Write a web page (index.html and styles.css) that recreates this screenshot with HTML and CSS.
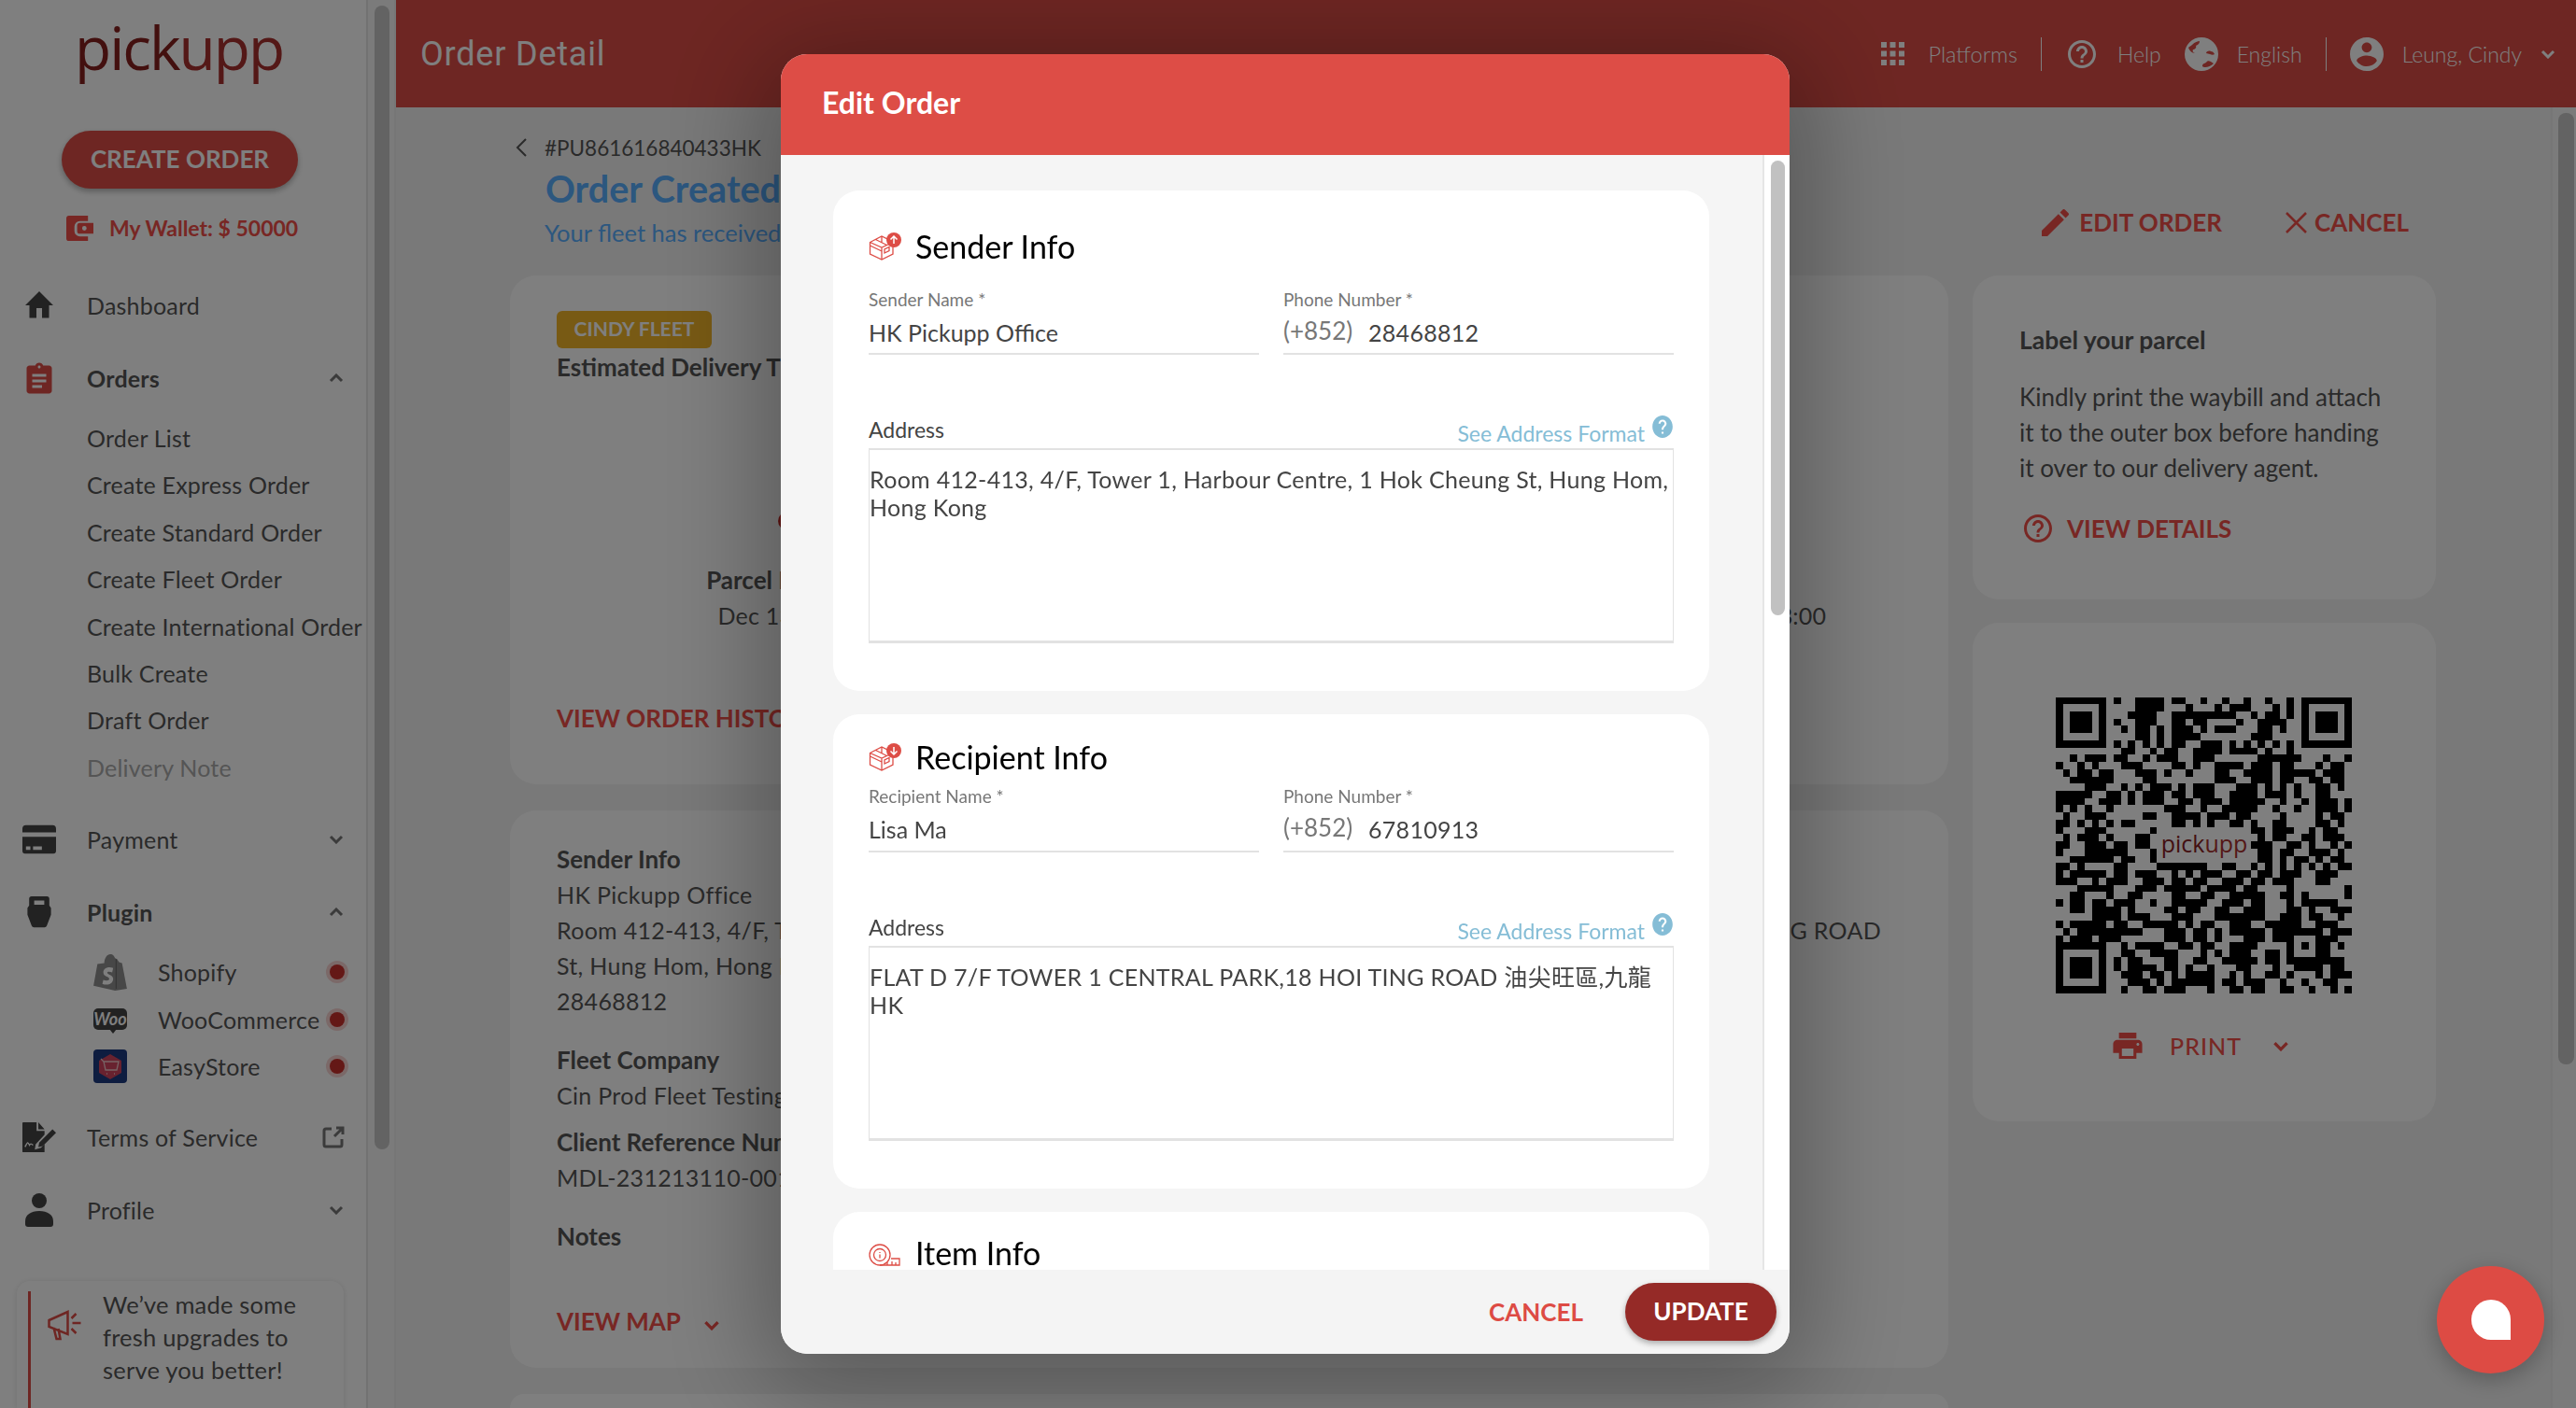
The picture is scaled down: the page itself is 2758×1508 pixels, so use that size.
FILE: index.html
```html
<!DOCTYPE html>
<html lang="en">
<head>
    <meta charset="UTF-8">
    <meta name="viewport" content="width=device-width, initial-scale=1.0">
    <title>Order Detail</title>
    <link rel="stylesheet" href="styles.css">
</head>
<body>
    <svg class="icon-defs" width="0" height="0">
        <symbol id="i-help" viewBox="0 0 24 24"><path d="M11 18h2v-2h-2v2zm1-16C6.48 2 2 6.48 2 12s4.48 10 10 10 10-4.48 10-10S17.52 2 12 2zm0 18c-4.41 0-8-3.59-8-8s3.59-8 8-8 8 3.59 8 8-3.59 8-8 8zm0-14c-2.21 0-4 1.79-4 4h2c0-1.1.9-2 2-2s2 .9 2 2c0 2-3 1.75-3 5h2c0-2.25 3-2.5 3-5 0-2.21-1.79-4-4-4z"/></symbol>
        <symbol id="i-help-fill" viewBox="0 0 24 24"><path d="M12 1C6.48 1 2 6 2 12s4.48 11 10 11 10-5 10-11S17.52 1 12 1zm1 18h-2v-2h2v2zm2.07-7.75l-.9.92C13.45 12.9 13 13.5 13 15h-2v-.5c0-1.1.45-2.1 1.17-2.83l1.24-1.26c.37-.36.59-.86.59-1.41 0-1.1-.9-2-2-2s-2 .9-2 2H8c0-2.21 1.79-4 4-4s4 1.79 4 4c0 .88-.36 1.68-.93 2.25z"/></symbol>
        <symbol id="i-up" viewBox="0 0 16 10"><path d="M2 8l6-6 6 6" fill="none" stroke="currentColor" stroke-width="3"/></symbol>
        <symbol id="i-down" viewBox="0 0 16 10"><path d="M2 2l6 6 6-6" fill="none" stroke="currentColor" stroke-width="3"/></symbol>
        <symbol id="i-box" viewBox="0 0 36 30">
            <path d="M1.500 10.500L14 4l12 6v13L14 29 1.500 23zM1.500 10.500L14 16l12-5.500M14 16v13M7.500 7.500l12 6M14 4v7M1.500 14l12.500 6" fill="none" stroke="currentColor" stroke-width="1.300"/>
            <path d="M17 22l5-2.500v-4l-5 2.500z" fill="none" stroke="currentColor" stroke-width="1.300"/>
            <circle cx="27" cy="8" r="8" fill="currentColor"/>
        </symbol>
    </svg>

    <div class="app">
        <aside class="sidebar">
            <div class="logo"><span class="logo-dark">pick</span>upp</div>
            <a class="create-btn">CREATE ORDER</a>
            <div class="wallet">
                <svg class="wallet-icon" viewBox="0 0 30 30"><path d="M3 1h21v6h-9a6 6 0 0 0-6 6v5a6 6 0 0 0 6 6h9v5H3a3 3 0 0 1-3-3V4a3 3 0 0 1 3-3z"/><path d="M15 9h15v12H15a3 3 0 0 1-3-3v-6a3 3 0 0 1 3-3zm5 3.500a2.500 2.500 0 1 0 0 5 2.500 2.500 0 0 0 0-5z" fill-rule="evenodd"/></svg>
                <span>My Wallet: $ 50000</span>
            </div>

            <nav class="nav">
                <div class="nav-row">
                    <svg class="nav-icon" viewBox="0 0 24 24"><path d="M10 21v-7h4v7h5v-9h3L12 2 2 12h3v9z"/></svg>
                    <span class="nav-text">Dashboard</span>
                </div>
                <div class="nav-row open">
                    <svg class="nav-icon red" viewBox="0 0 24 24"><path d="M19 3h-4.180C14.400 1.840 13.300 1 12 1c-1.300 0-2.400.84-2.820 2H5c-1.100 0-2 .9-2 2v16c0 1.100.9 2 2 2h14c1.100 0 2-.9 2-2V5c0-1.100-.9-2-2-2zm-7 0c.55 0 1 .45 1 1s-.45 1-1 1-1-.45-1-1 .45-1 1-1zm2 16H7v-2h7v2zm3-4H7v-2h10v2zm0-4H7V9h10v2z"/></svg>
                    <span class="nav-text">Orders</span>
                    <svg class="chev"><use href="#i-up"/></svg>
                </div>
                <div class="sub-list">
                    <div class="sub-row">Order List</div>
                    <div class="sub-row">Create Express Order</div>
                    <div class="sub-row">Create Standard Order</div>
                    <div class="sub-row">Create Fleet Order</div>
                    <div class="sub-row">Create International Order</div>
                    <div class="sub-row">Bulk Create</div>
                    <div class="sub-row">Draft Order</div>
                    <div class="sub-row disabled">Delivery Note</div>
                </div>
                <div class="nav-row">
                    <svg class="nav-icon" viewBox="0 0 38 34"><path d="M4 1h30a4 4 0 0 1 4 4v4H0V5a4 4 0 0 1 4-4zM0 14h38v16a3 3 0 0 1-3 3H3a3 3 0 0 1-3-3zm4 11v4h5v-4zm8 0v4h10v-4z" fill-rule="evenodd"/></svg>
                    <span class="nav-text">Payment</span>
                    <svg class="chev"><use href="#i-down"/></svg>
                </div>
                <div class="nav-row open">
                    <svg class="nav-icon" viewBox="0 0 28 40"><path d="M5 1a3 3 0 0 0-3 3v8L0 15v8l5 13a3 3 0 0 0 3 2h12a3 3 0 0 0 3-2l5-13v-8l-2-3V4a3 3 0 0 0-3-3zm3 5h12v5H8z" fill-rule="evenodd"/></svg>
                    <span class="nav-text">Plugin</span>
                    <svg class="chev"><use href="#i-up"/></svg>
                </div>
                <div class="sub-list plugin-list">
                    <div class="plugin-row">
                        <svg class="plugin-icon" viewBox="0 0 34 38"><path d="M11 10c0-5 3-9 6-9s4 2 5 4l2 1 2 3 3 1 5 26-12 2L0 33 4 11z" fill="#8e8e8e"/><path d="M23 6v30" stroke="#666" stroke-width="1"/><path d="M20 15c-5-2-10 0-10 4.500s6 4 6 6.500-4 2-6 1l-1 4c4 2 11 1 11-5 0-4-6-4-6-6.500 0-1 3-1 5 0z" fill="#fff"/></svg>
                        <span class="plugin-text">Shopify</span>
                        <span class="status-dot"></span>
                    </div>
                    <div class="plugin-row">
                        <span class="woo-icon">Woo</span>
                        <span class="plugin-text">WooCommerce</span>
                        <span class="status-dot"></span>
                    </div>
                    <div class="plugin-row">
                        <svg class="plugin-icon" viewBox="0 0 36 36"><rect width="36" height="36" rx="4" fill="#1c3a80"/><path d="M18 5l12 7v13l-12 7-12-7V12z" fill="#d0455e"/><path d="M11 13h16l-2 9H13zM14 26h1M22 26h1M8 10l3 3" fill="none" stroke="#efc6c9" stroke-width="1.300"/></svg>
                        <span class="plugin-text">EasyStore</span>
                        <span class="status-dot"></span>
                    </div>
                </div>
                <div class="nav-row">
                    <svg class="nav-icon" viewBox="0 0 38 34"><path d="M1 0h15v10h9v4L15 25l-1 6 7-2 4-4v9H1a1 1 0 0 1-1-1V1a1 1 0 0 1 1-1zM18 0l7 8h-7z"/><path d="M34 8l4 4-15 15-5 1 1-5z"/><path d="M3 28c3-6 3-6 5-2 1-2 2-2 4 0" stroke="#fff" stroke-width="1.500" fill="none"/></svg>
                    <span class="nav-text">Terms of Service</span>
                    <svg class="ext-icon" viewBox="0 0 24 24"><path d="M10 3H4a2 2 0 0 0-2 2v15a2 2 0 0 0 2 2h15a2 2 0 0 0 2-2v-6M13 11l9-9M15 2h7v7" fill="none" stroke="currentColor" stroke-width="3"/></svg>
                </div>
                <div class="nav-row">
                    <svg class="nav-icon" viewBox="0 0 30 36"><circle cx="15" cy="8" r="8"/><path d="M0 30c0-7 6-11 15-11s15 4 15 11v3a3 3 0 0 1-3 3H3a3 3 0 0 1-3-3z"/></svg>
                    <span class="nav-text">Profile</span>
                    <svg class="chev"><use href="#i-down"/></svg>
                </div>
            </nav>

            <div class="promo">
                <div class="promo-bar"></div>
                <svg class="promo-icon" viewBox="0 0 40 34"><path d="M1 12l20-9v24L1 19zM6 20l3 12h4l-2-11M25 10l5-5M26 15h9M25 21l5 5" fill="none" stroke="#dd4d46" stroke-width="2.500"/></svg>
                <p class="promo-text">We’ve made some<br>fresh upgrades to<br>serve you better!</p>
            </div>
        </aside>
        <div class="side-scroll"><div class="side-thumb"></div></div>

        <div class="page">
            <header class="topbar">
                <div class="page-title">Order Detail</div>
                <div class="top-items">
                    <svg class="grid-icon" viewBox="0 0 25 25"><path d="M0 0h6v6H0zM9.500 0h6v6h-6zM19 0h6v6h-6zM0 9.500h6v6H0zM9.500 9.500h6v6h-6zM19 9.500h6v6h-6zM0 19h6v6H0zM9.500 19h6v6h-6zM19 19h6v6h-6z"/></svg>
                    <span class="top-text platforms">Platforms</span>
                    <span class="top-sep"></span>
                    <svg class="top-icon"><use href="#i-help"/></svg>
                    <span class="top-text help">Help</span>
                    <svg class="top-icon globe" viewBox="0 0 36 36"><path d="M18 0a18 18 0 1 0 0 36 18 18 0 0 0 0-36zM8 8c3-3 6-4 8-4 0 3-2 4-4 5 1 2-1 4-3 4-1 2 0 3 2 4-3 0-6-3-7-6 1-1 3-2 4-3zm23 20c-4 4-10 5-12 3 0-3 2-3 4-4 1-2 3-2 5-1zm1-10c-1 1-3 1-5 0l-4-1c0-2 3-3 5-2 2 0 3 1 4 3z" fill-rule="evenodd"/></svg>
                    <span class="top-text english">English</span>
                    <span class="top-sep"></span>
                    <svg class="top-icon user" viewBox="2 2 20 20"><path d="M12 2C6.480 2 2 6.480 2 12s4.480 10 10 10 10-4.480 10-10S17.520 2 12 2zm0 3c1.660 0 3 1.340 3 3s-1.340 3-3 3-3-1.340-3-3 1.340-3 3-3zm0 14.200c-2.500 0-4.710-1.280-6-3.220.03-1.990 4-3.080 6-3.080 1.990 0 5.970 1.090 6 3.080-1.290 1.940-3.500 3.220-6 3.220z"/></svg>
                    <span class="top-text username">Leung, Cindy</span>
                    <svg class="chev top-chev"><use href="#i-down"/></svg>
                </div>
            </header>

            <div class="page-body">
                <main class="content">
                    <div class="order-head">
                        <div class="order-id-block">
                            <div class="back-row">
                                <svg class="back-icon" viewBox="0 0 13 22"><path d="M11 2l-9 9 9 9" fill="none" stroke="currentColor" stroke-width="2"/></svg>
                                <span>#PU861616840433HK</span>
                            </div>
                            <h1 class="order-status">Order Created</h1>
                            <p class="order-sub">Your fleet has received your order</p>
                        </div>
                        <div class="order-actions">
                            <a class="action-link">
                                <svg class="pencil" viewBox="3 3 18 18"><path d="M3 17.250V21h3.750L17.810 9.940l-3.750-3.750L3 17.250zM20.710 7.040c.39-.39.39-1.020 0-1.410l-2.340-2.340c-.39-.39-1.020-.39-1.410 0l-1.830 1.830 3.750 3.750 1.830-1.830z"/></svg>
                                EDIT ORDER
                            </a>
                            <a class="action-link cancel">
                                <svg class="cross" viewBox="0 0 23 23"><path d="M1 1l21 21M22 1L1 22" stroke="currentColor" stroke-width="2.500"/></svg>
                                CANCEL
                            </a>
                        </div>
                    </div>

                    <div class="columns">
                        <div class="col-main">
                            <section class="card card-status">
                                <span class="fleet-badge">CINDY FLEET</span>
                                <div class="bold-line">Estimated Delivery Time</div>
                                <div class="timeline">
                                    <div class="step">
                                        <span class="step-dot"></span>
                                        <b class="step-title">Parcel Pickup</b>
                                        <span class="step-date">Dec 13, 2023</span>
                                    </div>
                                    <div class="step step-end">
                                        <span class="step-dot"></span>
                                        <b class="step-title">Parcel Delivery</b>
                                        <span>Dec 14, 2023 14:00-18:00</span>
                                    </div>
                                </div>
                                <a class="card-link">VIEW ORDER HISTORY</a>
                            </section>

                            <section class="card card-info">
                                <div class="info-cols">
                                    <div class="info-left">
                                        <div class="bold-line">Sender Info</div>
                                        <div class="text-line">HK Pickupp Office</div>
                                        <div class="text-line">Room 412-413, 4/F, Tower 1, Harbour Centre, 1 Hok Cheung</div>
                                        <div class="text-line">St, Hung Hom, Hong Kong</div>
                                        <div class="text-line">28468812</div>
                                        <div class="bold-line gap-big">Fleet Company</div>
                                        <div class="text-line">Cin Prod Fleet Testing</div>
                                        <div class="bold-line gap-small">Client Reference Number</div>
                                        <div class="text-line">MDL-231213110-001</div>
                                        <div class="bold-line gap-big">Notes</div>
                                    </div>
                                    <div class="info-right">
                                        <div class="bold-line">Recipient Info</div>
                                        <div class="text-line">Lisa Ma</div>
                                        <div class="text-line">FLAT D 7/F TOWER 1 CENTRAL PARK,18 HOI TING ROAD</div>
                                    </div>
                                </div>
                                <a class="card-link map-link">VIEW MAP <svg class="map-chev"><use href="#i-down"/></svg></a>
                            </section>

                            <section class="card card-rest"></section>
                        </div>

                        <div class="col-side">
                            <section class="card card-label">
                                <div class="bold-line">Label your parcel</div>
                                <p class="label-text">Kindly print the waybill and attach<br>it to the outer box before handing<br>it over to our delivery agent.</p>
                                <a class="details-link"><svg class="details-icon"><use href="#i-help"/></svg>VIEW DETAILS</a>
                            </section>

                            <section class="card card-qr">
                                <div class="qr-wrap">
                                    <svg class="qr" viewBox="0 0 41 41" shape-rendering="crispEdges">
                                        <defs>
                                            <g id="qr-eye"><path d="M0 0h7v7H0zM1 1v5h5V1z" fill-rule="evenodd"/><path d="M2 2h3v3H2z"/></g>
                                        </defs>
                                        <use href="#qr-eye"/>
                                        <use href="#qr-eye" x="34"/>
                                        <use href="#qr-eye" y="34"/>
                                        <path fill="none" stroke="#000" d="M8 .5h1M11 .5h4M16 .5h2M20 .5h1M23 .5h1M26 .5h1M29 .5h1M32 .5h1
                                        M11 1.500h4M18 1.500h1M22 1.500h1M24 1.500h3M30 1.500h1M32 1.500h1
                                        M10 2.500h4M16 2.500h9M27 2.500h1M29 2.500h2M32 2.500h1
                                        M8 3.500h1M11 3.500h3M16 3.500h2M19 3.500h2M25 3.500h1M28 3.500h4
                                        M9 4.500h1M11 4.500h2M14 4.500h1M16 4.500h3M20 4.500h1M22 4.500h3M28 4.500h2M31 4.500h1
                                        M11 5.500h2M14 5.500h1M16 5.500h4M27 5.500h3
                                        M8 6.500h1M10 6.500h1M12 6.500h1M14 6.500h1M16 6.500h2M20 6.500h3M24 6.500h1M26 6.500h1M28 6.500h1M30 6.500h1M32 6.500h1
                                        M9 7.500h2M13 7.500h1M15 7.500h2M19 7.500h4M24 7.500h4M29 7.500h1M32 7.500h1
                                        M2 8.500h1M4 8.500h3M8 8.500h2M12 8.500h1M14 8.500h3M19 8.500h3M28 8.500h6M37 8.500h1M40 8.500h1
                                        M0 9.500h1M3 9.500h1M5 9.500h1M9 9.500h3M16 9.500h2M19 9.500h1M22 9.500h4M27 9.500h3M31 9.500h2M36 9.500h1M38 9.500h2
                                        M1 10.500h1M3 10.500h2M6 10.500h2M11 10.500h3M15 10.500h1M18 10.500h1M22 10.500h2M26 10.500h4M31 10.500h5M37 10.500h3
                                        M2 11.500h6M12 11.500h2M22 11.500h3M27 11.500h3M31 11.500h2M35 11.500h2M38 11.500h2
                                        M4 12.500h3M9 12.500h1M11 12.500h1M13 12.500h3M17 12.500h1M19 12.500h3M25 12.500h3M29 12.500h1M31 12.500h1M33 12.500h1M36 12.500h2M39 12.500h1
                                        M0 13.500h5M7 13.500h2M10 13.500h1M12 13.500h3M16 13.500h2M19 13.500h3M24 13.500h4M29 13.500h3M33 13.500h1M36 13.500h2
                                        M0 14.500h4M6 14.500h3M10 14.500h1M12 14.500h3M17 14.500h2M20 14.500h3M24 14.500h5M31 14.500h1M34 14.500h1M36 14.500h3M40 14.500h1
                                        M0 15.500h1M2 15.500h1M4 15.500h1M7 15.500h1M15 15.500h3M20 15.500h1M23 15.500h5M30 15.500h1M33 15.500h1M36 15.500h3M40 15.500h1
                                        M1 16.500h1M4 16.500h3M12 16.500h2M16 16.500h4M21 16.500h3M25 16.500h2M31 16.500h1M36 16.500h1M38 16.500h2
                                        M0 17.500h2M3 17.500h1M5 17.500h1M7 17.500h1M9 17.500h2M16 17.500h2M19 17.500h1M21 17.500h1M24 17.500h2M27 17.500h1M30 17.500h2M36 17.500h2M39 17.500h1
                                        M0 18.500h1M4 18.500h3M13 18.500h1M27 18.500h2M30 18.500h3M35 18.500h1M37 18.500h2
                                        M1 19.500h1M3 19.500h3M7 19.500h1M11 19.500h2M28 19.500h1M30 19.500h2M34 19.500h2M37 19.500h3
                                        M0 20.500h2M4 20.500h3M8 20.500h2M11 20.500h2M27 20.500h3M32 20.500h2M35 20.500h1M38 20.500h1M40 20.500h1
                                        M0 21.500h1M4 21.500h3M7 21.500h3M13 21.500h1M28 21.500h2M31 21.500h2M35 21.500h3M39 21.500h1
                                        M2 22.500h6M9 22.500h2M13 22.500h1M28 22.500h2M31 22.500h1M33 22.500h2M36 22.500h1M38 22.500h2
                                        M0 23.500h2M3 23.500h1M8 23.500h2M14 23.500h7M23 23.500h2M27 23.500h1M29 23.500h1M31 23.500h1M33 23.500h1M35 23.500h1M37 23.500h1M39 23.500h2
                                        M0 24.500h1M2 24.500h5M8 24.500h2M11 24.500h3M16 24.500h1M18 24.500h1M20 24.500h3M25 24.500h2M28 24.500h2M31 24.500h3M36 24.500h3
                                        M0 25.500h3M5 25.500h1M7 25.500h3M12 25.500h3M16 25.500h2M19 25.500h2M23 25.500h3M27 25.500h2M30 25.500h3M36 25.500h2
                                        M3 26.500h5M11 26.500h3M15 26.500h5M21 26.500h4M26 26.500h2M32 26.500h1M40 26.500h1
                                        M2 27.500h2M7 27.500h1M10 27.500h2M16 27.500h2M20 27.500h2M24 27.500h5M31 27.500h2M34 27.500h1M40 27.500h1
                                        M0 28.500h1M2 28.500h2M5 28.500h2M8 28.500h3M13 28.500h1M16 28.500h5M23 28.500h3M27 28.500h2M32 28.500h1M34 28.500h5
                                        M2 29.500h2M5 29.500h4M10 29.500h1M15 29.500h2M18 29.500h2M22 29.500h2M26 29.500h3M32 29.500h2M35 29.500h1M38 29.500h3
                                        M5 30.500h4M10 30.500h3M16 30.500h3M22 30.500h7M31 30.500h3M35 30.500h2M39 30.500h1
                                        M0 31.500h1M2 31.500h5M8 31.500h2M12 31.500h5M18 31.500h1M20 31.500h2M24 31.500h3M29 31.500h5M36 31.500h3
                                        M1 32.500h1M3 32.500h9M15 32.500h3M19 32.500h2M22 32.500h1M24 32.500h5M30 32.500h2M38 32.500h3
                                        M0 33.500h1M2 33.500h3M6 33.500h3M15 33.500h3M19 33.500h2M22 33.500h1M26 33.500h3M30 33.500h2M37 33.500h2
                                        M9 34.500h1M11 34.500h4M17 34.500h2M20 34.500h2M24 34.500h4M37 34.500h1M39 34.500h1
                                        M9 35.500h2M13 35.500h4M20 35.500h1M22 35.500h1M24 35.500h3M29 35.500h2M37 35.500h1
                                        M8 36.500h1M10 36.500h2M15 36.500h2M19 36.500h2M23 36.500h5M29 36.500h2M37 36.500h3
                                        M8 37.500h1M10 37.500h4M15 37.500h2M18 37.500h1M21 37.500h1M25 37.500h2M30 37.500h1M33 37.500h4M38 37.500h2
                                        M9 38.500h3M13 38.500h2M16 38.500h1M18 38.500h4M24 38.500h1M26 38.500h1M29 38.500h2M32 38.500h1M36 38.500h1M38 38.500h3
                                        M10 39.500h3M14 39.500h1M16 39.500h6M23 39.500h2M26 39.500h3M31 39.500h1M34 39.500h1M37 39.500h2
                                        M9 40.500h1M12 40.500h2M15 40.500h3M21 40.500h1M24 40.500h2M27 40.500h2M31 40.500h2M35 40.500h1M38 40.500h1M40 40.500h1"/>
                                        <path d="M32 32h5v5h-5zM33 33v3h3v-3z" fill-rule="evenodd"/>
                                        <path d="M34 34h1v1h-1z"/>
                                    </svg>
                                    <div class="qr-logo"><span class="logo-dark">pick</span>upp</div>
                                </div>
                                <div class="print-row">
                                    <svg class="print-icon" viewBox="2 3 20 18"><path d="M19 8H5c-1.660 0-3 1.340-3 3v6h4v4h12v-4h4v-6c0-1.660-1.340-3-3-3zm-3 11H8v-5h8v5zm3-7c-.55 0-1-.45-1-1s.45-1 1-1 1 .45 1 1-.45 1-1 1zm-1-9H6v4h12V3z"/></svg>
                                    <span class="print-text">PRINT</span>
                                    <svg class="print-chev"><use href="#i-down"/></svg>
                                </div>
                            </section>
                        </div>
                    </div>
                </main>
                <div class="page-scroll"><div class="page-thumb"></div></div>
            </div>
        </div>
    </div>

    <div class="overlay">
        <div class="modal">
            <div class="modal-head">Edit Order</div>
            <div class="modal-middle">
                <div class="modal-body">
                    <section class="form-card sender-card">
                        <div class="form-title sender-title">
                            <svg class="form-icon"><use href="#i-box"/></svg>
                            <svg class="form-arrow" viewBox="0 0 10 10"><path d="M5 9V1M1.500 4.500L5 1l3.500 3.500" fill="none" stroke="#fff" stroke-width="1.500"/></svg>
                            Sender Info
                        </div>
                        <div class="field-row">
                            <div class="field">
                                <div class="field-label">Sender Name *</div>
                                <div class="field-value">HK Pickupp Office</div>
                            </div>
                            <div class="field">
                                <div class="field-label">Phone Number *</div>
                                <div class="field-value"><span class="phone-code">(+852)</span><span class="num">28468812</span></div>
                            </div>
                        </div>
                        <div class="address-head">
                            <span>Address</span>
                            <span class="address-help">See Address Format<svg class="format-icon"><use href="#i-help-fill"/></svg></span>
                        </div>
                        <div class="address-box">Room 412-413, 4/F, Tower 1, Harbour Centre, 1 Hok Cheung St, Hung Hom,<br>Hong Kong</div>
                    </section>

                    <section class="form-card recipient-card">
                        <div class="form-title recipient-title">
                            <svg class="form-icon"><use href="#i-box"/></svg>
                            <svg class="form-arrow" viewBox="0 0 10 10"><path d="M5 1v8M1.500 5.500L5 9l3.500-3.500" fill="none" stroke="#fff" stroke-width="1.500"/></svg>
                            Recipient Info
                        </div>
                        <div class="field-row">
                            <div class="field">
                                <div class="field-label">Recipient Name *</div>
                                <div class="field-value">Lisa Ma</div>
                            </div>
                            <div class="field">
                                <div class="field-label">Phone Number *</div>
                                <div class="field-value"><span class="phone-code">(+852)</span><span class="num">67810913</span></div>
                            </div>
                        </div>
                        <div class="address-head">
                            <span>Address</span>
                            <span class="address-help">See Address Format<svg class="format-icon"><use href="#i-help-fill"/></svg></span>
                        </div>
                        <div class="address-box">FLAT D 7/F TOWER 1 CENTRAL PARK,18 HOI TING ROAD 油尖旺區,九龍<br>HK</div>
                    </section>

                    <section class="form-card item-card">
                        <div class="form-title">
                            <svg class="form-icon item-icon" viewBox="0 0 34 28"><circle cx="12" cy="13" r="11" fill="none" stroke="currentColor" stroke-width="1.300"/><circle cx="12" cy="13" r="6.500" fill="none" stroke="currentColor" stroke-width="1.300"/><path d="M12 10v1M12 12.500v4M12 24h21v-7h-9M20 24v-3M25 24v-4M29 24v-3" fill="none" stroke="currentColor" stroke-width="1.300"/></svg>
                            Item Info
                        </div>
                    </section>
                </div>
                <div class="modal-scroll"><div class="modal-thumb"></div></div>
            </div>
            <div class="modal-foot">
                <a class="foot-cancel">CANCEL</a>
                <a class="foot-update">UPDATE</a>
            </div>
        </div>
    </div>

    <div class="chat-fab"><span class="chat-bubble"></span></div>
</body>
</html>
```

FILE: styles.css
```css
* {
    box-sizing: border-box;
}
html, body {
    margin: 0;
    height: 100%;
    overflow: hidden;
}
body {
    font-family: Lato, 'Noto Sans CJK TC', sans-serif;
    font-size: 25px;
    letter-spacing: 0.2px;
    color: #555;
    background-color: #f2f2f2;
}
p, h1 {
    margin: 0;
}
.icon-defs {
    position: absolute;
}
.app {
    display: flex;
    height: 100vh;
}

/* sidebar */
.sidebar {
    width: 394px;
    flex: none;
    height: 100%;
    position: relative;
    background-color: #fff;
    border-right: 2px solid #e4e4e4;
    overflow: hidden;
}
.logo {
    height: 115px;
    padding: 9px 0 0 80px;
    font-family: 'Open Sans', sans-serif;
    font-size: 64px;
    line-height: 84px;
    letter-spacing: -2px;
    color: #a8302e;
}
.logo-dark {
    color: #86211f;
}
.create-btn {
    display: block;
    width: 253px;
    height: 62px;
    margin: 25px 0 0 66px;
    border-radius: 31px;
    background-color: #dd4d46;
    box-shadow: 0 3px 6px rgba(0, 0, 0, 0.3);
    color: #fff;
    font-weight: 700;
    font-size: 26px;
    letter-spacing: 0;
    line-height: 60px;
    text-align: center;
}
.wallet {
    display: flex;
    align-items: center;
    gap: 17px;
    height: 30px;
    margin: 27px 0 0 71px;
    color: #f04e48;
    font-size: 23px;
    letter-spacing: 0;
    font-weight: 700;
}
.wallet-icon {
    width: 29px;
    height: 29px;
    fill: #f04e48;
}
.nav {
    padding-top: 43px;
}
.nav-row {
    display: flex;
    align-items: center;
    height: 50px;
    margin-bottom: 28px;
    padding: 0 24px 0 24px;
    position: relative;
}
.nav-row.open {
    margin-bottom: 14px;
    font-weight: 700;
}
.nav-icon {
    width: 36px;
    height: 36px;
    flex: none;
    fill: #444;
}
.nav-icon.red {
    fill: #dd4d46;
}
.nav-text {
    margin-left: 33px;
    flex: 1;
}
.chev {
    width: 16px;
    height: 10px;
    flex: none;
    color: #777;
}
.ext-icon {
    width: 24px;
    height: 24px;
    margin-right: -1px;
    color: #777;
}
.sub-list {
    margin-bottom: 27px;
}
.plugin-list {
    margin-bottom: 26px;
}
.sub-row {
    height: 50.400px;
    padding-left: 93px;
    line-height: 50px;
    white-space: nowrap;
}
.sub-row.disabled {
    color: #aaa;
}
.plugin-row {
    display: flex;
    align-items: center;
    height: 50.300px;
    padding-left: 100px;
}
.plugin-icon {
    width: 36px;
    height: 40px;
    flex: none;
}
.woo-icon {
    position: relative;
    width: 36px;
    flex: none;
    height: 23px;
    background-color: #444;
    border-radius: 5px;
    color: #fff;
    font-size: 18px;
    letter-spacing: 0;
    font-weight: 700;
    font-style: italic;
    line-height: 22px;
    text-align: center;
}
.woo-icon::after {
    content: "";
    position: absolute;
    left: 17px;
    top: 22px;
    border-top: 5px solid #444;
    border-left: 4px solid transparent;
    border-right: 4px solid transparent;
}
.plugin-text {
    margin-left: 33px;
    flex: 1;
}
.status-dot {
    width: 16px;
    height: 16px;
    margin-right: 23px;
    border-radius: 50%;
    background-color: #c9302c;
    box-shadow: 0 0 0 4px rgba(221, 77, 70, 0.25);
}
.promo {
    position: absolute;
    left: 18px;
    right: 24px;
    top: 1372px;
    height: 136px;
    background-color: #fff;
    border-radius: 14px 14px 0 0;
    box-shadow: 0 1px 6px rgba(0, 0, 0, 0.12);
}
.promo-bar {
    position: absolute;
    left: 12px;
    top: 11px;
    bottom: 0;
    width: 3px;
    background-color: #dd4d46;
}
.promo-icon {
    position: absolute;
    left: 33px;
    top: 30px;
    width: 41px;
    height: 34px;
}
.promo-text {
    padding: 8px 0 0 92px;
    font-size: 25.500px;
    line-height: 35px;
}
.side-scroll {
    width: 30px;
    flex: none;
    padding: 6px 5px 0 7px;
    background-color: #f7f7f7;
    border-right: 2px solid #ededed;
}
.side-thumb {
    width: 16px;
    height: 1225px;
    border-radius: 8px;
    background-color: #c6c6c6;
}

/* page */
.page {
    flex: 1;
    display: flex;
    flex-direction: column;
    min-width: 0;
}
.topbar {
    height: 115px;
    flex: none;
    display: flex;
    align-items: center;
    justify-content: space-between;
    padding: 0 22px 0 26px;
    background-color: #dd4d46;
    color: #fff;
}
.page-title {
    font-family: Roboto, sans-serif;
    font-size: 36px;
    letter-spacing: 0.8px;
}
.top-items {
    display: flex;
    align-items: center;
    font-size: 23px;
    letter-spacing: 0;
}
.top-text {
    font-weight: 300;
}
.platforms {
    font-size: 23.500px;
}
.grid-icon {
    width: 25px;
    height: 25px;
    fill: #fff;
    margin-right: 25px;
}
.top-sep {
    width: 1px;
    height: 36px;
    background-color: #fff;
    margin: 0 25px;
}
.top-icon {
    width: 36px;
    height: 36px;
    fill: #fff;
    flex: none;
}
.help {
    margin: 0 25px 0 20px;
}
.english {
    margin-left: 20px;
}
.username {
    margin: 0 20px 0 20px;
}
.top-chev {
    color: #fff;
}
.page-body {
    flex: 1;
    display: flex;
    min-height: 0;
}
.content {
    flex: 1;
    min-width: 0;
    padding: 0 123px 0 122px;
}
.page-scroll {
    width: 27px;
    flex: none;
    padding: 6px 4px 0 6px;
    background-color: #f7f7f7;
    border-left: 2px solid #ececec;
}
.page-thumb {
    width: 17px;
    height: 1019px;
    border-radius: 8px;
    background-color: #c6c6c6;
}

/* order head */
.order-head {
    height: 180px;
    display: flex;
    justify-content: space-between;
    padding: 28px 29px 0 6px;
}
.back-row {
    display: flex;
    align-items: center;
    gap: 18px;
    height: 30px;
    font-size: 22.500px;
    letter-spacing: 0;
    color: #555;
}
.back-icon {
    width: 13px;
    height: 22px;
    color: #555;
}
.order-status {
    margin: 4px 0 0 32px;
    font-size: 39.500px;
    letter-spacing: 0;
    line-height: 50px;
    font-weight: 700;
    color: #58aeff;
    white-space: nowrap;
}
.order-sub {
    margin: 7px 0 0 31px;
    font-size: 25.500px;
    letter-spacing: 0;
    line-height: 30px;
    color: #58aeff;
    white-space: nowrap;
}
.order-actions {
    display: flex;
    align-items: center;
    gap: 68px;
    height: 40px;
    margin-top: 75px;
}
.action-link {
    display: flex;
    align-items: center;
    gap: 11px;
    font-size: 26px;
    letter-spacing: 0;
    font-weight: 700;
    color: #f04e48;
}
.action-link.cancel {
    gap: 8px;
}
.pencil {
    width: 29px;
    height: 29px;
    fill: #f04e48;
}
.cross {
    width: 23px;
    height: 23px;
}

/* cards */
.columns {
    display: flex;
    gap: 26px;
    align-items: flex-start;
}
.col-main {
    width: 1540px;
    flex: none;
}
.col-side {
    width: 496px;
    flex: none;
}
.card {
    background-color: #fff;
    border-radius: 28px;
    margin-bottom: 28px;
}
.card-status {
    height: 545px;
    padding: 38px 50px 0;
}
.fleet-badge {
    display: block;
    width: 166px;
    height: 40px;
    border-radius: 6px;
    background-color: #f0b429;
    color: #fff;
    font-size: 21px;
    letter-spacing: 0;
    font-weight: 700;
    line-height: 38px;
    text-align: center;
}
.bold-line {
    font-weight: 700;
    font-size: 26px;
    letter-spacing: 0;
    line-height: 38px;
    white-space: nowrap;
}
.card-status .bold-line {
    margin-top: 1px;
}
.timeline {
    display: flex;
    height: 130px;
    margin-top: 136px;
}
.step {
    width: 320px;
    flex: none;
    margin-left: 78px;
    display: flex;
    flex-direction: column;
    align-items: center;
    font-size: 25px;
    line-height: 38px;
    white-space: nowrap;
}
.step-end {
    width: 480px;
    margin-left: 572px;
}
.step-title {
    font-size: 26px;
    letter-spacing: 0;
}
.step-date {
    padding-left: 21px;
}
.step-dot {
    width: 20px;
    height: 20px;
    margin: 0 0 34px 18px;
    border-radius: 50%;
    background-color: #c9302c;
}
.card-link {
    display: block;
    margin-top: 75px;
    color: #f04e48;
    font-size: 26px;
    letter-spacing: 0;
    font-weight: 700;
}
.card-info {
    height: 597px;
    padding: 33px 72px 0 50px;
    position: relative;
}
.info-cols {
    display: flex;
    justify-content: space-between;
}
.text-line {
    font-size: 25px;
    letter-spacing: 0.3px;
    line-height: 38px;
    white-space: nowrap;
}
.gap-big {
    margin-top: 25px;
}
.gap-small {
    margin-top: 12px;
}
.map-link {
    position: absolute;
    left: 50px;
    bottom: 34px;
    margin: 0;
}
.map-chev {
    width: 18px;
    height: 11px;
    margin-left: 18px;
}
.card-rest {
    height: 15px;
    margin-bottom: 0;
    border-radius: 28px 28px 0 0;
}
.card-label {
    height: 347px;
    padding: 50px 50px 0;
    margin-bottom: 25px;
}
.card-label .bold-line {
    font-size: 26.500px;
}
.label-text {
    margin-top: 24px;
    font-size: 26px;
    letter-spacing: 0;
    line-height: 37.800px;
    white-space: nowrap;
}
.details-link {
    display: flex;
    align-items: center;
    gap: 13px;
    margin-top: 28px;
    margin-left: 2px;
    color: #f04e48;
    font-size: 26px;
    letter-spacing: 0;
    font-weight: 700;
}
.details-icon {
    width: 36px;
    height: 36px;
    fill: #f04e48;
    flex: none;
}
.card-qr {
    height: 534px;
    padding: 79px 0 0 89px;
}
.qr-wrap {
    position: relative;
    width: 317px;
    height: 318px;
}
.qr {
    display: block;
    width: 317px;
    height: 318px;
}
.qr-logo {
    position: absolute;
    left: 109px;
    top: 142px;
    width: 100px;
    height: 33px;
    background-color: #fff;
    color: #a8302e;
    font-family: 'Open Sans', sans-serif;
    font-size: 25px;
    letter-spacing: 0;
    line-height: 31px;
    text-align: center;
}
.print-row {
    display: flex;
    align-items: center;
    height: 40px;
    margin: 36px 0 0 61px;
    color: #f04e48;
}
.print-icon {
    width: 32px;
    height: 28px;
    fill: #f04e48;
}
.print-text {
    margin-left: 29px;
    font-size: 25px;
    font-weight: 500;
    letter-spacing: 1px;
}
.print-chev {
    width: 18px;
    height: 11px;
    margin-left: 33px;
}

/* modal */
.overlay {
    position: fixed;
    inset: 0;
    display: flex;
    align-items: center;
    justify-content: center;
    background-color: rgba(0, 0, 0, 0.5);
}
.modal {
    width: 1080px;
    height: 1392px;
    margin-left: -6px;
    display: flex;
    flex-direction: column;
    border-radius: 28px;
    background-color: #f4f4f4;
    overflow: hidden;
    box-shadow: 0 20px 110px 20px rgba(0, 0, 0, 0.3);
}
.modal-head {
    height: 108px;
    flex: none;
    padding-left: 44px;
    background-color: #dd4d46;
    color: #fff;
    font-size: 32px;
    letter-spacing: 0;
    font-weight: 700;
    line-height: 104px;
}
.modal-middle {
    flex: 1;
    display: flex;
    min-height: 0;
}
.modal-body {
    flex: 1;
    overflow: hidden;
    padding: 38px 57px 0 56px;
    background-color: #f5f5f5;
}
.modal-scroll {
    width: 29px;
    flex: none;
    padding: 6px 7px 0 7px;
    background-color: #fff;
    border-left: 2px solid #e6e6e6;
}
.modal-thumb {
    width: 15px;
    height: 487px;
    border-radius: 8px;
    background-color: #c1c1c1;
}
.form-card {
    background-color: #fff;
    border-radius: 28px;
    margin-bottom: 25px;
    padding: 39px 38px 51px;
    letter-spacing: 0;
}
.recipient-card {
    padding-top: 25px;
}
.item-card {
    padding-top: 23px;
}
.form-title {
    position: relative;
    display: flex;
    align-items: center;
    height: 40px;
    padding-left: 50px;
    font-size: 34px;
    color: #000;
}
.sender-title {
    margin-bottom: 27px;
}
.recipient-title {
    margin-bottom: 12px;
}
.recipient-card .field {
    height: 71px;
}
.form-icon {
    position: absolute;
    left: 0;
    top: 6px;
    width: 36px;
    height: 30px;
    color: #dd4d46;
}
.item-icon {
    top: 10px;
    width: 34px;
    height: 28px;
}
.form-arrow {
    position: absolute;
    left: 22px;
    top: 9px;
    width: 10px;
    height: 10px;
}
.field-row {
    display: flex;
    gap: 26px;
}
.field {
    width: 418px;
    height: 70px;
    border-bottom: 2px solid #e2e2e2;
}
.field-label {
    font-size: 19px;
    line-height: 22px;
    color: #777;
}
.field-value {
    display: flex;
    align-items: center;
    margin-top: 9px;
    font-size: 25px;
    line-height: 30px;
    color: #444;
}
.num {
    letter-spacing: 0.3px;
}
.phone-code {
    width: 91px;
    margin-top: -4px;
    font-size: 26px;
    color: #777;
}
.address-head {
    display: flex;
    justify-content: space-between;
    align-items: flex-start;
    height: 30px;
    margin-top: 70px;
    font-size: 23px;
    line-height: 20px;
    color: #444;
}
.address-help {
    display: flex;
    align-items: center;
    padding-top: 4px;
    color: #85bdd6;
}
.format-icon {
    width: 26px;
    height: 26px;
    margin: -14px -1px 0 6px;
    fill: #85bdd6;
}
.address-box {
    height: 209px;
    padding-top: 16px;
    border: 1px solid #e2e2e2;
    border-top-width: 2px;
    border-bottom-width: 3px;
    font-size: 25px;
    letter-spacing: 0.3px;
    line-height: 30px;
    color: #444;
    white-space: nowrap;
}
.modal-foot {
    height: 90px;
    flex: none;
    display: flex;
    align-items: center;
    justify-content: flex-end;
    gap: 45px;
    padding: 0 14px 0 0;
    background-color: #f4f4f4;
    position: relative;
}
.foot-cancel {
    color: #dd4b44;
    font-size: 26px;
    letter-spacing: 0;
    font-weight: 700;
}
.foot-update {
    width: 162px;
    height: 62px;
    border-radius: 31px;
    background-color: #952a27;
    box-shadow: 0 3px 6px rgba(0, 0, 0, 0.3);
    color: #fff;
    font-size: 26px;
    letter-spacing: 0;
    font-weight: 700;
    line-height: 60px;
    text-align: center;
}

/* chat */
.chat-fab {
    position: fixed;
    left: 2609px;
    top: 1356px;
    width: 115px;
    height: 115px;
    display: flex;
    align-items: center;
    justify-content: center;
    border-radius: 50%;
    background-color: #dd4b44;
    box-shadow: 0 6px 24px rgba(0, 0, 0, 0.25);
}
.chat-bubble {
    width: 42px;
    height: 43px;
    background-color: #fff;
    border-radius: 22px 22px 0 22px;
}
```
